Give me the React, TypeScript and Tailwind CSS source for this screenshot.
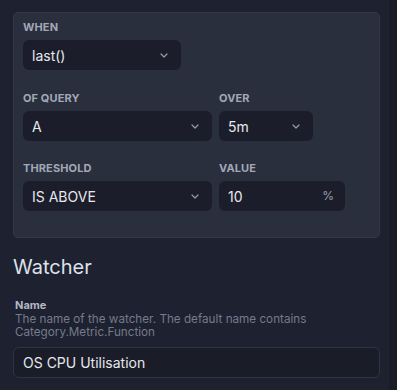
function Chevron() {
  return (
    <svg width="8" height="5" viewBox="0 0 8 5" fill="none" className="shrink-0">
      <path d="M1 1l3 3 3-3" stroke="#939aa8" strokeWidth="1.2" strokeLinecap="round" strokeLinejoin="round" />
    </svg>
  )
}

function Label({ children }: { children: string }) {
  return (
    <div className="text-[11px] font-bold leading-[14px] tracking-[0.01em] text-[#a2a8b6] uppercase">
      {children}
    </div>
  )
}

function Select({ value, width }: { value: string; width: string }) {
  return (
    <div
      className={`mt-[6px] flex h-[30px] ${width} items-center justify-between rounded-md bg-[#1b1e2a] pl-[9px] pr-[13px] text-[14px] text-[#e6e8ee]`}
    >
      <span>{value}</span>
      <Chevron />
    </div>
  )
}

export default function App() {
  return (
    <div
      className="flex h-[390px] w-[397px] overflow-hidden bg-[#1e2130]"
      style={{ fontFamily: 'Inter, "Noto Sans", sans-serif' }}
    >
      <div className="flex-1 pl-[13px] pr-[9px] pt-[12px]">
        <div className="rounded-[5px] border border-[#333848] bg-[#2a2f3e] px-[9px] pb-[26px] pt-[7px]">
          <Label>When</Label>
          <Select value="last()" width="w-[158px]" />

          <div className="mt-[21px] flex gap-[7px]">
            <div>
              <Label>Of Query</Label>
              <Select value="A" width="w-[189px]" />
            </div>
            <div>
              <Label>Over</Label>
              <Select value="5m" width="w-[94px]" />
            </div>
          </div>

          <div className="mt-[20px] flex gap-[7px]">
            <div>
              <Label>Threshold</Label>
              <Select value="IS ABOVE" width="w-[189px]" />
            </div>
            <div>
              <Label>Value</Label>
              <div className="mt-[6px] flex h-[30px] w-[126px] items-center justify-between rounded-md bg-[#1b1e2a] pl-[9px] pr-[11px] text-[14px] text-[#e6e8ee]">
                <span>10</span>
                <span className="text-[12px] text-[#9aa0ae]">%</span>
              </div>
            </div>
          </div>
        </div>

        <h2 className="mt-[15px] text-[20px] leading-[28px] text-[#dfe2ea]">Watcher</h2>

        <div className="mt-[17px] pl-[2px] text-[11px] font-bold leading-[14px] text-[#b3b8c4]">Name</div>
        <p className="mt-[1px] pl-[2px] text-[11.7px] leading-[13px] text-[#747b8b]">
          The name of the watcher. The default name contains Category.Metric.Function
        </p>
        <div className="mt-[8px] flex h-[31px] items-center rounded-md border border-[#2f3444] bg-[#1a1d28] pl-[9px] text-[14px] text-[#e6e8ee]">
          OS CPU Utilisation
        </div>
      </div>
      <div className="w-[8px] bg-[#1a1d28]" />
    </div>
  )
}
